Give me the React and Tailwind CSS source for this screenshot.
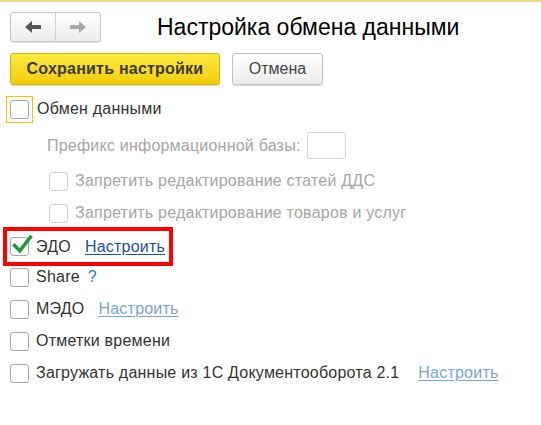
import React from "react";

const font = { fontFamily: '"Liberation Sans", Arial, sans-serif' };

function Box({ disabled, checked }) {
  return (
    <div
      className={`relative w-[19px] h-[19px] shrink-0 rounded-[3px] border bg-white ${
        disabled ? "border-[#d2d2d2]" : "border-[#a8a8a8]"
      }`}
    >
      {checked && (
        <svg className="absolute left-[1px] top-[-4px]" width="21" height="21" viewBox="0 0 20 20">
          <path d="M2.5 11 L7.5 16 L17.5 3" fill="none" stroke="#1c9a3e" strokeWidth="3.4" strokeLinecap="square" />
        </svg>
      )}
    </div>
  );
}

function Row({ children, className = "" }) {
  return <div className={`h-[32px] flex items-center ${className}`}>{children}</div>;
}

function Arrow({ dir, color }) {
  return (
    <svg width="16" height="12" viewBox="0 0 16 12" className={dir === "right" ? "rotate-180" : ""}>
      <path d="M0 6 L7 0 L7 4 L16 4 L16 8 L7 8 L7 12 Z" fill={color} />
    </svg>
  );
}

export default function App() {
  return (
    <div className="w-[541px] h-[425px] bg-white text-[#333] text-[16px] tracking-[0.22px] border-t-2 border-[#ecdc8e] overflow-hidden" style={font}>
      <div className="flex items-center pl-[10px] pt-[10px]">
        <div className="flex h-[30px] w-[91px] rounded-[3px] border border-[#c6c6c6] bg-gradient-to-b from-white to-[#ececec] shadow-[0_1px_1px_rgba(0,0,0,0.12)]">
          <div className="flex-1 flex items-center justify-center border-r border-[#d4d4d4]">
            <Arrow dir="left" color="#555" />
          </div>
          <div className="flex-1 flex items-center justify-center">
            <Arrow dir="right" color="#a9a9a9" />
          </div>
        </div>
        <div className="ml-[56px] text-[23px] tracking-normal text-black leading-none">Настройка обмена данными</div>
      </div>
      <div className="flex items-center gap-[12px] pl-[10px] mt-[11px]">
        <button className="h-[32px] w-[210px] rounded-[3px] border border-[#d8b500] bg-gradient-to-b from-[#fdea3c] to-[#f2cc00] font-bold text-[16px] text-[#3a3a3a] shadow-[0_1px_1px_rgba(0,0,0,0.15)]">
          Сохранить настройки
        </button>
        <button className="h-[32px] w-[91px] rounded-[3px] border border-[#c2c2c2] bg-gradient-to-b from-white to-[#ececec] text-[16px] tracking-normal text-[#444] shadow-[0_1px_1px_rgba(0,0,0,0.15)]">
          Отмена
        </button>
      </div>
      <div className="flex flex-col pl-[10px] mt-[8px]">
        <Row>
          <div className="-ml-[4px] p-[3px] border border-[#f3c600]">
            <Box />
          </div>
          <span className="ml-[4px]">Обмен данными</span>
        </Row>
        <div className="h-[40px] pt-[1px] flex items-center pl-[37px] text-[#a6a6a6]">
          <span>Префикс информационной базы:</span>
          <div className="ml-[6px] w-[39px] h-[27px] rounded-[3px] border border-[#d6d6d6]" />
        </div>
        <Row className="pl-[39px] text-[#a6a6a6]">
          <Box disabled />
          <span className="ml-[7px]">Запретить редактирование статей ДДС</span>
        </Row>
        <Row className="pl-[39px] text-[#a6a6a6]">
          <Box disabled />
          <span className="ml-[7px]">Запретить редактирование товаров и услуг</span>
        </Row>
        <div className="h-[32px] flex">
          <div className="-ml-[7px] w-[170px] h-[39px] -mt-[2px] flex items-center pl-[3px] border-[4px] border-[#ff0000]">
            <Box checked />
            <span className="ml-[7px]">ЭДО</span>
            <span className="ml-[14px] text-[#1f4fa3] underline underline-offset-2">Настроить</span>
          </div>
        </div>
        <Row>
          <Box />
          <span className="ml-[7px]">Share</span>
          <span className="ml-[8px] text-[#2f78d0]">?</span>
        </Row>
        <Row>
          <Box />
          <span className="ml-[7px]">МЭДО</span>
          <span className="ml-[14px] text-[#7aa3e0] underline underline-offset-2">Настроить</span>
        </Row>
        <Row>
          <Box />
          <span className="ml-[7px]">Отметки времени</span>
        </Row>
        <Row>
          <Box />
          <span className="ml-[7px]">Загружать данные из 1С Документооборота 2.1</span>
          <span className="ml-[19px] text-[#7aa3e0] underline underline-offset-2">Настроить</span>
        </Row>
      </div>
    </div>
  );
}
